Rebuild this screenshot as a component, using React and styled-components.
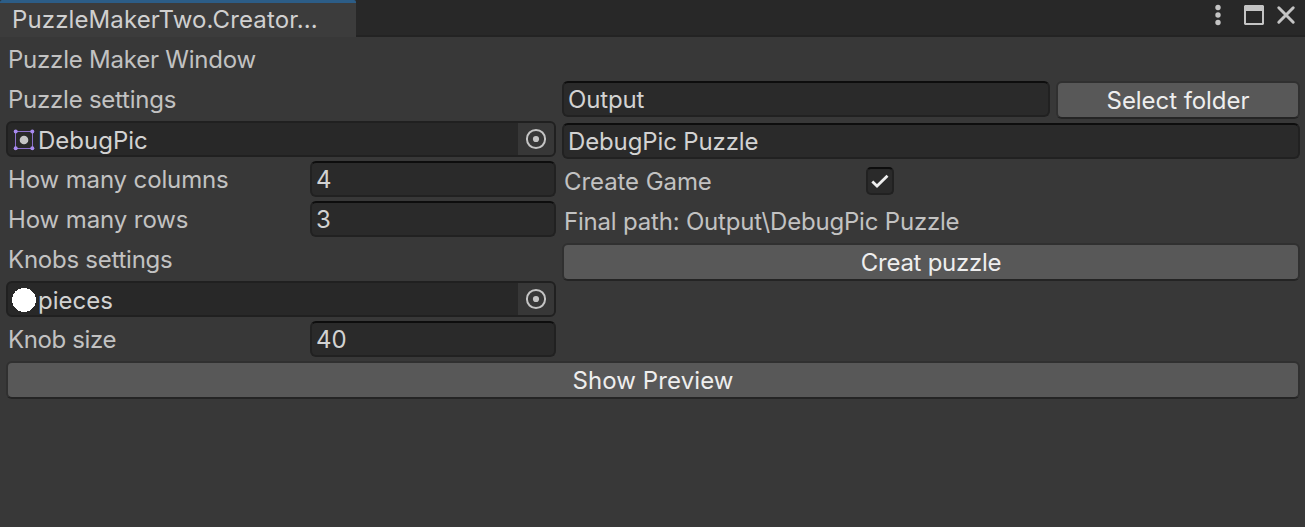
import React from "react";
import styled, { createGlobalStyle } from "styled-components";

const GlobalStyle = createGlobalStyle`
  * { box-sizing: border-box; }
  body { margin: 0; background: #383838; }
`;

const Window = styled.div`
  width: 1305px;
  height: 527px;
  overflow: hidden;
  background: #383838;
  color: #c2c2c2;
  font: 400 24px/36px Inter, "Liberation Sans", sans-serif;
  white-space: nowrap;
`;

const TitleBar = styled.div`
  display: flex;
  justify-content: space-between;
  height: 37px;
  background: linear-gradient(#282828 35px, #232323 35px);
`;

const Tab = styled.div`
  width: 356px;
  padding-left: 12px;
  border-top: 3px solid #2c5d87;
  border-radius: 2px 2px 0 0;
  background: #3c3c3c;
  color: #d0d0d0;
  line-height: 33px;
`;

const WindowControls = styled.div`
  display: flex;
  padding: 4px 8px 0 0;
`;

const Text = styled.span`
  letter-spacing: ${(p) => p.$spacing || 0}px;
`;

const Body = styled.div`
  padding: 3px 5px 0 6px;
`;

const Label = styled.div`
  width: ${(p) => (p.$width ? p.$width + "px" : "auto")};
  height: 40px;
  padding-left: 2px;
  line-height: ${(p) => p.$line || 40}px;
`;

const Columns = styled.div`
  display: grid;
  grid-template-columns: 550px 738px;
  column-gap: 6px;
`;

const Column = styled.div`
  display: flex;
  flex-direction: column;
`;

const Row = styled.div`
  display: flex;
  height: ${(p) => p.$height || 40}px;
  padding-top: ${(p) => p.$top ?? 1}px;
  gap: ${(p) => p.$gap || 0}px;
`;

const PropertyRow = styled.div`
  display: flex;
  align-items: flex-start;
  height: 40px;
`;

const Input = styled.div`
  flex: 1;
  height: 36px;
  margin-top: ${(p) => p.$top || 0}px;
  padding-left: 4px;
  border: 2px solid #212121;
  border-top-color: #0d0d0d;
  border-radius: 6px;
  background: #2a2a2a;
  color: #d2d2d2;
  line-height: 33px;
`;

const ObjectField = styled.div`
  display: flex;
  width: 100%;
  height: 36px;
  padding-left: 4px;
  border: 2px solid #202020;
  border-radius: 6px;
  background: #282828;
  color: #d2d2d2;
  line-height: 35px;
  overflow: hidden;
`;

const ObjectName = styled.div`
  flex: 1;
  padding-left: 2px;
`;

const Picker = styled.div`
  width: 36px;
  height: 32px;
  background: #373737;
`;

const Button = styled.div`
  width: ${(p) => (p.$width ? p.$width + "px" : "100%")};
  height: 38px;
  border: 2px solid #303030;
  border-bottom-color: #242424;
  border-radius: 6px;
  background: #585858;
  color: #eeeeee;
  line-height: 35px;
  text-align: center;
`;

const Checkbox = styled.div`
  width: 28px;
  height: 28px;
  margin-top: 6px;
  border: 2px solid #212121;
  border-top-color: #0d0d0d;
  border-radius: 5px;
  background: #2a2a2a;
`;

const Icon = styled.svg`
  display: block;
  flex: none;
`;

const PickerIcon = () => (
  <Picker>
    <Icon width="36" height="32" viewBox="0 0 36 32">
      <circle cx="18" cy="16" r="9.1" fill="none" stroke="#c4c4c4" strokeWidth="2" />
      <circle cx="18" cy="16" r="3.1" fill="#c4c4c4" />
    </Icon>
  </Picker>
);

const SpriteIcon = () => (
  <Icon width="24" height="32" viewBox="0 0 24 32">
    <rect x="3.5" y="8.5" width="17" height="17" fill="none" stroke="#8a6fc8" strokeWidth="1" />
    <g fill="#a98bf0">
      <circle cx="3.7" cy="8.6" r="2" />
      <circle cx="20.3" cy="8.6" r="2" />
      <circle cx="3.7" cy="25.2" r="2" />
      <circle cx="20.3" cy="25.2" r="2" />
    </g>
    <circle cx="12" cy="17" r="4.3" fill="#c4c4c4" />
  </Icon>
);

const DiscIcon = () => (
  <Icon width="24" height="32" viewBox="0 0 24 32">
    <circle cx="12" cy="17" r="12" fill="#fff" shapeRendering="crispEdges" />
  </Icon>
);

export default function App() {
  return (
    <Window>
      <GlobalStyle />
      <TitleBar>
        <Tab><Text $spacing={0.12}>PuzzleMakerTwo.Creator...</Text></Tab>
        <WindowControls>
          <Icon width="90" height="24" viewBox="0 0 90 24">
            <g fill="#c4c4c4">
              <circle cx="11" cy="3.5" r="2.7" />
              <circle cx="11" cy="11" r="2.7" />
              <circle cx="11" cy="18.5" r="2.7" />
              <path fillRule="evenodd" d="M38 1h18l1 1v18l-1 1H38l-1-1V2zM39 7v12h16V7z" />
            </g>
            <path d="M71.8 3.8l14.4 14.4m0-14.4l-14.4 14.4" stroke="#c4c4c4" strokeWidth="3" strokeLinecap="round" />
          </Icon>
        </WindowControls>
      </TitleBar>
      <Body>
        <Label><Text $spacing={-0.22}>Puzzle Maker Window</Text></Label>
        <Columns>
          <Column>
            <Label><Text $spacing={-0.24}>Puzzle settings</Text></Label>
            <Row>
              <ObjectField>
                <SpriteIcon />
                <ObjectName><Text>DebugPic</Text></ObjectName>
                <PickerIcon />
              </ObjectField>
            </Row>
            <PropertyRow>
              <Label $width={304}><Text $spacing={-0.13}>How many columns</Text></Label>
              <Input $top={1}>4</Input>
            </PropertyRow>
            <PropertyRow>
              <Label $width={304}><Text $spacing={-0.1}>How many rows</Text></Label>
              <Input $top={1}>3</Input>
            </PropertyRow>
            <Label><Text $spacing={-0.25}>Knobs settings</Text></Label>
            <Row>
              <ObjectField>
                <DiscIcon />
                <ObjectName><Text>pieces</Text></ObjectName>
                <PickerIcon />
              </ObjectField>
            </Row>
            <PropertyRow>
              <Label $width={304}><Text $spacing={-0.38}>Knob size</Text></Label>
              <Input $top={1}>40</Input>
            </PropertyRow>
          </Column>
          <Column>
            <Row $height={43} $gap={6}>
              <Input><Text $spacing={-0.15}>Output</Text></Input>
              <Button $width={244}><Text $spacing={-0.06}>Select folder</Text></Button>
            </Row>
            <Row $height={38} $top={0}>
              <Input><Text $spacing={-0.13}>DebugPic Puzzle</Text></Input>
            </Row>
            <PropertyRow>
              <Label $width={304} $line={42}><Text $spacing={-0.08}>Create Game</Text></Label>
              <Checkbox>
                <Icon width="24" height="24" viewBox="0 0 24 24">
                  <path d="M4.3 12.6l4.7 4.4L19.5 6.8" fill="none" stroke="#eee" strokeWidth="2.8" />
                </Icon>
              </Checkbox>
            </PropertyRow>
            <Label $line={42}><Text $spacing={-0.2}>Final path: Output\DebugPic Puzzle</Text></Label>
            <Row $top={2}>
              <Button><Text $spacing={-0.28}>Creat puzzle</Text></Button>
            </Row>
          </Column>
        </Columns>
        <Row>
          <Button><Text $spacing={0.1}>Show Preview</Text></Button>
        </Row>
      </Body>
    </Window>
  );
}
